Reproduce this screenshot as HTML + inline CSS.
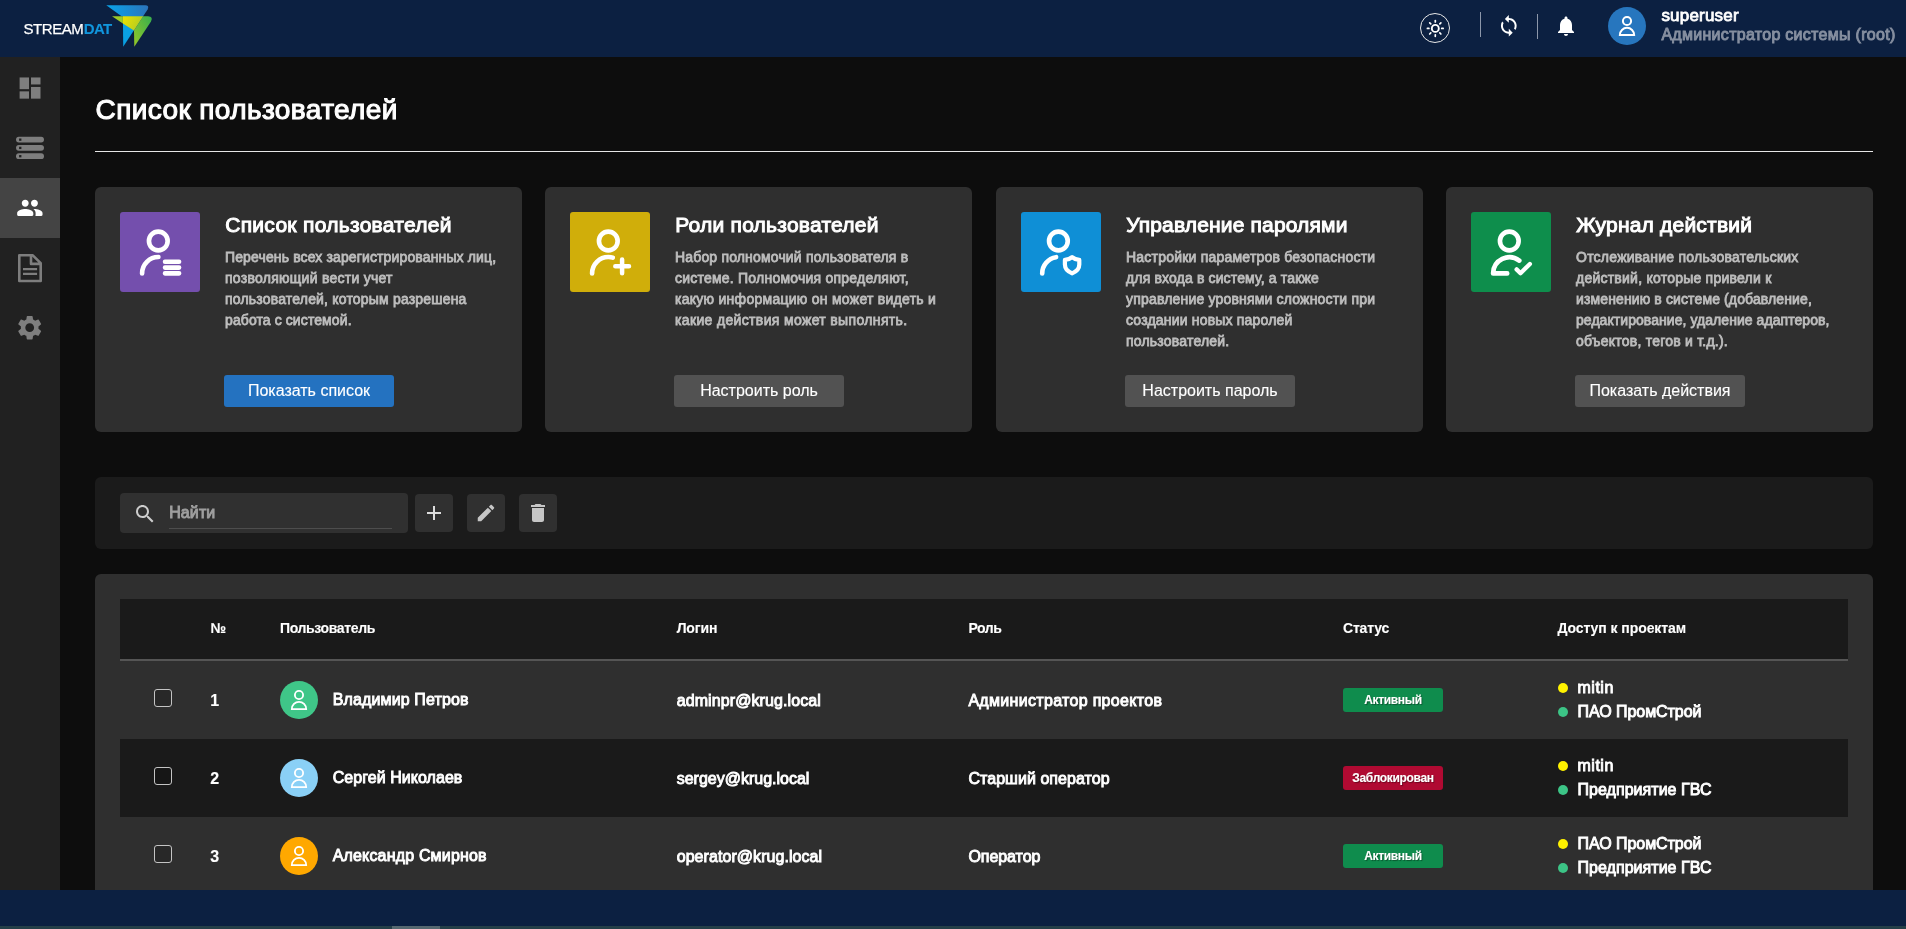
<!DOCTYPE html>
<html lang="ru">
<head>
<meta charset="utf-8">
<title>Список пользователей</title>
<style>
*{box-sizing:border-box;margin:0;padding:0}
html,body{width:1906px;height:929px;overflow:hidden;background:#0d0d0d;font-family:"Liberation Sans",sans-serif;color:#fff}
#root{position:absolute;left:0;top:0;width:1906px;height:929px;will-change:transform}
.abs{position:absolute}
.t{position:absolute;white-space:nowrap;font-weight:400}
.m{-webkit-text-stroke:.9px currentColor}
.b{font-weight:700;-webkit-text-stroke:.12px currentColor}
#hdr{position:absolute;left:0;top:0;width:1906px;height:57px;background:#0c2041}
#side{position:absolute;left:0;top:57px;width:60px;height:833px;background:#212121}
#side .act{position:absolute;left:0;top:121px;width:60px;height:60px;background:#444}
#foot{position:absolute;left:0;top:890px;width:1906px;height:36px;background:#0c2041}
#strip{position:absolute;left:0;top:926px;width:1906px;height:3px;background:#253f48}
#strip i{position:absolute;left:392px;top:0;width:48px;height:3px;background:#566870}
#hr{position:absolute;left:95px;top:151px;width:1778px;height:1px;background:#e6e6e6}
.card{position:absolute;top:187px;width:427px;height:245px;background:#2f2f2f;border-radius:6px}
.ico{position:absolute;left:25px;top:25px;width:80px;height:80px;border-radius:3px}
.ico svg{position:absolute;left:0;top:0}
.desc{position:absolute;left:130px;top:59.6px;font-size:14px;line-height:21px;color:#bdbdbd;white-space:nowrap;-webkit-text-stroke:.8px currentColor}
.btn{position:absolute;left:129px;top:188px;width:170px;height:32px;border-radius:3px;background:#525252;font-size:16px;line-height:32px;text-align:center;white-space:nowrap;-webkit-text-stroke:.12px currentColor}
.btn.pri{background:#2472c0}
#tools{position:absolute;left:95px;top:477px;width:1778px;height:72px;background:#1b1b1b;border-radius:6px}
#search{position:absolute;left:25px;top:16px;width:288px;height:40px;background:#303030;border-radius:4px}
#search u{position:absolute;left:49px;top:34.5px;width:223px;height:1px;background:#4d4d4d}
.tb{position:absolute;top:17px;width:38px;height:38px;background:#303030;border-radius:4px}
#panel{position:absolute;left:95px;top:574px;width:1778px;height:330px;background:#2f2f2f;border-radius:6px}
#thead{position:absolute;left:25px;top:25px;width:1728px;height:62px;background:#1a1a1a;border-bottom:2px solid #555}
.row{position:absolute;left:25px;width:1728px;height:78px}
.row.dark{background:#1a1a1a}
.cb{position:absolute;left:34px;top:28px;width:18px;height:18px;border:1px solid #c4c4c4;border-radius:3px;background:rgba(0,0,0,.15)}
.av{position:absolute;left:160px;top:20px;width:38px;height:38px;border-radius:50%}
.bdg{position:absolute;left:1223px;top:27px;width:100px;height:24px;border-radius:3px;background:#0f8c4d}
.bdg.red{background:#b00a32}
.dot{position:absolute;left:1437.5px;width:10px;height:10px;border-radius:50%}
.y{background:#fff200}.g{background:#3cc486}
</style>
</head>
<body>
<div id="root">
<div id="hdr">
<span class="t " style="left:23.5px;top:18.8px;font-size:15px;line-height:19px;letter-spacing:-0.436px;-webkit-text-stroke:.25px #fff;">STREAM</span>
<span class="t b" style="left:83.8px;top:18.8px;font-size:15px;line-height:19px;letter-spacing:-0.706px;color:#1196dd;">DAT</span>
<svg class="abs" style="left:100px;top:0" width="60" height="56" viewBox="100 0 60 56">
<defs>
<linearGradient id="lb" x1="108" y1="10" x2="148" y2="10" gradientUnits="userSpaceOnUse"><stop offset="0" stop-color="#0aa2e8"/><stop offset="1" stop-color="#2b74bc"/></linearGradient>
<linearGradient id="lg" x1="126" y1="34" x2="151" y2="20" gradientUnits="userSpaceOnUse"><stop offset="0" stop-color="#98c926"/><stop offset="1" stop-color="#3db04b"/></linearGradient>
<linearGradient id="ly" x1="123" y1="18" x2="140" y2="26" gradientUnits="userSpaceOnUse"><stop offset="0" stop-color="#ece100"/><stop offset="1" stop-color="#b4cd22"/></linearGradient>
</defs>
<path fill="url(#lb)" d="M106.3 5.3H145.2Q149.6 5.3 147.6 9.4L143.1 16.3H121.6Z"/>
<path fill="#0aa0e2" d="M122.9 16.3H143.1L123.2 46.8Z"/>
<path fill="#9ccb28" d="M112 16.3H122.9V23.4Z"/>
<path fill="url(#lg)" d="M143.1 16.3H148.2Q153.4 16.9 151 21.4L134.3 46.8L134 30.5Z"/>
<path fill="url(#ly)" d="M122.9 16.3H143.1L133.9 30.5L122.9 23.4Z"/>
</svg>
<div class="abs" style="left:1420px;top:13px;width:30px;height:30px;border:1px solid #e8e8e8;border-radius:50%"></div>
<svg class="abs" style="left:1423px;top:16px" width="24" height="24" viewBox="-12 -12 24 24" fill="none" stroke="#fff" stroke-linecap="round"><circle cx="0.3" cy="0.4" r="3.5" stroke-width="1.9"/><g transform="translate(0.3 0.4)" stroke-width="1.7"><line x1="0" y1="-6.4" x2="0" y2="-7.9" transform="rotate(0)"/><line x1="0" y1="-6.4" x2="0" y2="-7.9" transform="rotate(45)"/><line x1="0" y1="-6.4" x2="0" y2="-7.9" transform="rotate(90)"/><line x1="0" y1="-6.4" x2="0" y2="-7.9" transform="rotate(135)"/><line x1="0" y1="-6.4" x2="0" y2="-7.9" transform="rotate(180)"/><line x1="0" y1="-6.4" x2="0" y2="-7.9" transform="rotate(225)"/><line x1="0" y1="-6.4" x2="0" y2="-7.9" transform="rotate(270)"/><line x1="0" y1="-6.4" x2="0" y2="-7.9" transform="rotate(315)"/></g></svg>
<div class="abs" style="left:1480px;top:12px;width:1px;height:25px;background:#8d97aa"></div>
<svg class="abs" style="left:1497.2px;top:14.1px" width="23.6" height="23.6" viewBox="0 0 24 24"><path fill="#fff" d="M12 4V1L8 5l4 4V6c3.31 0 6 2.69 6 6 0 1.01-.25 1.97-.7 2.8l1.46 1.46C19.54 15.03 20 13.57 20 12c0-4.42-3.58-8-8-8zm0 14c-3.31 0-6-2.69-6-6 0-1.01.25-1.97.7-2.8L5.24 7.74C4.46 8.97 4 10.43 4 12c0 4.42 3.58 8 8 8v3l4-4-4-4v3z"/></svg>
<div class="abs" style="left:1537px;top:14px;width:1px;height:25px;background:#8d97aa"></div>
<svg class="abs" style="left:1554px;top:13.5px" width="24" height="24" viewBox="0 0 24 24"><path fill="#fff" d="M12 22c1.1 0 2-.9 2-2h-4c0 1.1.89 2 2 2zm6-6v-5c0-3.07-1.64-5.64-4.5-6.32V4c0-.83-.67-1.5-1.5-1.5s-1.5.67-1.5 1.5v.68C7.63 5.36 6 7.92 6 11v5l-2 2v1h16v-1l-2-2z"/></svg>
<div class="abs" style="left:1608px;top:7px;width:38px;height:38px;border-radius:50%;background:#2776be"><svg width="38" height="38" viewBox="0 0 38 38" fill="none" stroke="#fff" stroke-width="2"><circle cx="19" cy="14" r="4.1"/><path d="M11.85 28.05A7.15 7.2 0 0 1 26.15 28.05Z" stroke-linejoin="miter"/></svg></div>
<span class="t m" style="left:1661.4px;top:5.11px;font-size:17px;line-height:22px;letter-spacing:0.199px;-webkit-text-stroke:.8px #fff;">superuser</span>
<span class="t m" style="left:1661.4px;top:25.46px;font-size:16px;line-height:20px;letter-spacing:0.288px;color:#868fa0;">Администратор системы (root)</span>
</div>
<div id="side"><div class="act"></div>
<svg class="abs" style="left:0;top:0" width="60" height="60" viewBox="0 0 60 60" fill="#7e7e7e"><rect x="19.6" y="20.45" width="9.4" height="11.7"/><rect x="19.6" y="34.35" width="9.4" height="7.3"/><rect x="31" y="20.45" width="9.5" height="7"/><rect x="31" y="29.95" width="9.5" height="11.7"/></svg>
<svg class="abs" style="left:0;top:0" width="60" height="120" viewBox="0 0 60 120"><rect x="16" y="79.7" width="28" height="5.8" rx="2.9" fill="#7e7e7e"/><rect x="19.1" y="81.5" width="2.3" height="2.3" fill="#212121"/><rect x="16" y="87.95" width="28" height="5.8" rx="2.9" fill="#7e7e7e"/><rect x="19.1" y="89.75" width="2.3" height="2.3" fill="#212121"/><rect x="16" y="96.25" width="28" height="5.8" rx="2.9" fill="#7e7e7e"/><rect x="19.1" y="98.05" width="2.3" height="2.3" fill="#212121"/></svg>
<svg class="abs" style="left:16.1px;top:137.25px" width="27.7" height="27.7" viewBox="0 0 24 24"><path fill="#fff" d="M16 11c1.66 0 2.99-1.34 2.99-3S17.66 5 16 5s-3 1.34-3 3 1.34 3 3 3zm-8 0c1.66 0 2.99-1.34 2.99-3S9.66 5 8 5 5 6.34 5 8s1.34 3 3 3zm0 2c-2.33 0-7 1.17-7 3.5V18c0 .55.45 1 1 1h12c.55 0 1-.45 1-1v-1.5c0-2.33-4.67-3.5-7-3.5zm8 0c-.29 0-.62.02-.97.05.02.01.03.03.04.04 1.14.83 1.93 1.94 1.93 3.41V18c0 .35-.07.69-.18 1H22c.55 0 1-.45 1-1v-1.5c0-2.33-4.67-3.5-7-3.5z"/></svg>
<svg class="abs" style="left:0;top:181px" width="60" height="60" viewBox="0 0 60 60" fill="none" stroke="#7e7e7e" stroke-linejoin="round"><path stroke-width="2.6" d="M19.3 17.3H32.8L40.7 25.2V43H19.3Z M31 17.3V25.9H40.7"/><path stroke-width="2.2" d="M23 31.1H37.1M23 35.85H37.1"/></svg>
<svg class="abs" style="left:15.3px;top:256.1px" width="29.4" height="29.4" viewBox="0 0 24 24"><path fill="#7e7e7e" d="M19.14 12.94c.04-.3.06-.61.06-.94 0-.32-.02-.64-.07-.94l2.03-1.58c.18-.14.23-.41.12-.61l-1.92-3.32c-.12-.22-.37-.29-.59-.22l-2.39.96c-.5-.38-1.03-.7-1.62-.94l-.36-2.54c-.04-.24-.24-.41-.48-.41h-3.84c-.24 0-.43.17-.47.41l-.36 2.54c-.59.24-1.13.57-1.62.94l-2.39-.96c-.22-.08-.47 0-.59.22L2.74 8.87c-.12.21-.08.47.12.61l2.03 1.58c-.05.3-.09.63-.09.94s.02.64.07.94l-2.03 1.58c-.18.14-.23.41-.12.61l1.92 3.32c.12.22.37.29.59.22l2.39-.96c.5.38 1.03.7 1.62.94l.36 2.54c.05.24.24.41.48.41h3.84c.24 0 .44-.17.47-.41l.36-2.54c.59-.24 1.13-.56 1.62-.94l2.39.96c.22.08.47 0 .59-.22l1.92-3.32c.12-.22.07-.47-.12-.61l-2.01-1.58zM12 15.6c-1.98 0-3.6-1.62-3.6-3.6s1.62-3.6 3.6-3.6 3.6 1.62 3.6 3.6-1.62 3.6-3.6 3.6z"/></svg>
</div>
<span class="t " style="left:95.6px;top:92.6px;font-size:28px;line-height:34px;letter-spacing:0.396px;-webkit-text-stroke:1.1px #fff;">Список пользователей</span>
<div id="hr"></div>
<div class="card" style="left:95px">
<div class="ico" style="background:#744fad"><svg width="80" height="80" viewBox="0 0 80 80" stroke="#fff" fill="none" stroke-linecap="round" stroke-linejoin="round"><circle cx="38.3" cy="29" r="9.35" stroke-width="4.65"/><path stroke-width="4.65" d="M22.1 61.4A16.3 16.4 0 0 1 38.4 45"/><g stroke="none" fill="#fff"><rect x="42.8" y="47.4" width="18.5" height="4.7" rx="2.1"/><rect x="42.8" y="53.2" width="18.5" height="4.7" rx="2.1"/><rect x="42.8" y="59" width="18.5" height="4.7" rx="2.1"/></g></svg></div>
<span class="t " style="left:130.2px;top:24.52px;font-size:21px;line-height:26px;letter-spacing:0.297px;-webkit-text-stroke:1px #fff;">Список пользователей</span>
<p class="desc"><span style="letter-spacing:0.132px">Перечень всех зарегистрированных лиц,</span><br><span style="letter-spacing:0.268px">позволяющий вести учет</span><br><span style="letter-spacing:0.188px">пользователей, которым разрешена</span><br><span style="letter-spacing:0.098px">работа с системой.</span></p>
<div class="btn pri">Показать список</div>
</div>
<div class="card" style="left:545px">
<div class="ico" style="background:#d0ae0a"><svg width="80" height="80" viewBox="0 0 80 80" stroke="#fff" fill="none" stroke-linecap="round" stroke-linejoin="round"><circle cx="38.3" cy="29" r="9.35" stroke-width="4.65"/><path stroke-width="4.65" d="M22.1 61.4A16.3 16.4 0 0 1 38.4 45Q41 45 42.8 45.6"/><path stroke-width="4.5" d="M45.3 54.3H59M52.1 47.5V61.3"/></svg></div>
<span class="t " style="left:130.2px;top:24.52px;font-size:21px;line-height:26px;letter-spacing:0.243px;-webkit-text-stroke:1px #fff;">Роли пользователей</span>
<p class="desc"><span style="letter-spacing:0.168px">Набор полномочий пользователя в</span><br><span style="letter-spacing:0.225px">системе. Полномочия определяют,</span><br><span style="letter-spacing:0.269px">какую информацию он может видеть и</span><br><span style="letter-spacing:0.349px">какие действия может выполнять.</span></p>
<div class="btn">Настроить роль</div>
</div>
<div class="card" style="left:996px">
<div class="ico" style="background:#0f8fd6"><svg width="80" height="80" viewBox="0 0 80 80" stroke="#fff" fill="none" stroke-linecap="round" stroke-linejoin="round"><g transform="translate(-0.9 0)"><circle cx="38.3" cy="29" r="9.35" stroke-width="4.65"/><path stroke-width="4.65" d="M22.1 61.4A16.3 16.4 0 0 1 36 45.2"/><path stroke-width="4.2" stroke-linejoin="round" d="M52 45.1Q49.2 47.6 44.8 47.9V52.6C44.8 56.6 47.6 59.6 52 61.4C56.4 59.6 59.2 56.6 59.2 52.6V47.9Q54.8 47.6 52 45.1Z"/></g></svg></div>
<span class="t " style="left:130.2px;top:24.52px;font-size:21px;line-height:26px;letter-spacing:0.159px;-webkit-text-stroke:1px #fff;">Управление паролями</span>
<p class="desc"><span style="letter-spacing:0.217px">Настройки параметров безопасности</span><br><span style="letter-spacing:0.147px">для входа в систему, а также</span><br><span style="letter-spacing:0.183px">управление уровнями сложности при</span><br><span style="letter-spacing:0.185px">создании новых паролей</span><br><span style="letter-spacing:0.202px">пользователей.</span></p>
<div class="btn">Настроить пароль</div>
</div>
<div class="card" style="left:1446px">
<div class="ico" style="background:#0e8e4c"><svg width="80" height="80" viewBox="0 0 80 80" stroke="#fff" fill="none" stroke-linecap="round" stroke-linejoin="round"><circle cx="38.3" cy="29" r="9.35" stroke-width="4.65"/><path stroke-width="4.65" d="M48.3 48.6A16.3 16.4 0 0 0 22.1 61.4H36.2"/><path stroke-width="4.3" d="M45.6 57.4L49.5 61.2L58.9 52"/></svg></div>
<span class="t " style="left:130.2px;top:24.52px;font-size:21px;line-height:26px;letter-spacing:0.206px;-webkit-text-stroke:1px #fff;">Журнал действий</span>
<p class="desc"><span style="letter-spacing:0.237px">Отслеживание пользовательских</span><br><span style="letter-spacing:0.236px">действий, которые привели к</span><br><span style="letter-spacing:0.124px">изменению в системе (добавление,</span><br><span style="letter-spacing:0.057px">редактирование, удаление адаптеров,</span><br><span style="letter-spacing:0.229px">объектов, тегов и т.д.).</span></p>
<div class="btn">Показать действия</div>
</div>
<div id="tools"><div id="search">
<svg class="abs" style="left:13.3px;top:8.8px" width="24" height="24" viewBox="0 0 24 24"><path fill="#cdcdcd" d="M15.5 14h-.79l-.28-.27C15.41 12.59 16 11.11 16 9.5 16 5.91 13.09 3 9.5 3S3 5.91 3 9.5 5.91 16 9.5 16c1.61 0 3.09-.59 4.23-1.57l.27.28v.79l5 4.99L20.49 19l-4.99-5zm-6 0C7.01 14 5 11.99 5 9.5S7.01 5 9.5 5 14 7.01 14 9.5 11.99 14 9.5 14z"/></svg>
<span class="t m" style="left:49.2px;top:9.66px;font-size:16px;line-height:20px;letter-spacing:0.113px;color:#9e9e9e;">Найти</span>
<u></u></div>
<div class="tb" style="left:320px"><svg class="abs" style="left:7.0px;top:7.0px" width="24" height="24" viewBox="0 0 24 24"><path fill="#dcdcdc" d="M19 13h-6v6h-2v-6H5v-2h6V5h2v6h6v2z"/></svg></div>
<div class="tb" style="left:372px"><svg class="abs" style="left:8.0px;top:8.0px" width="22" height="22" viewBox="0 0 24 24"><path fill="#c6c6c6" d="M3 17.25V21h3.75L17.81 9.94l-3.75-3.75L3 17.25zM20.71 7.04c.39-.39.39-1.02 0-1.41l-2.34-2.34c-.39-.39-1.02-.39-1.41 0l-1.83 1.83 3.75 3.75 1.83-1.83z"/></svg></div>
<div class="tb" style="left:424px"><svg class="abs" style="left:7.0px;top:7.0px" width="24" height="24" viewBox="0 0 24 24"><path fill="#c6c6c6" d="M6 19c0 1.1.9 2 2 2h8c1.1 0 2-.9 2-2V7H6v12zM19 4h-3.5l-1-1h-5l-1 1H5v2h14V4z"/></svg></div>
</div>
<div id="panel"><div id="thead">
<span class="t b" style="left:90.6px;top:20.15px;font-size:14px;line-height:18px;letter-spacing:-1.009px;">№</span>
<span class="t b" style="left:160px;top:20.15px;font-size:14px;line-height:18px;letter-spacing:-0.357px;">Пользователь</span>
<span class="t b" style="left:556.7px;top:20.15px;font-size:14px;line-height:18px;letter-spacing:-0.156px;">Логин</span>
<span class="t b" style="left:848.4px;top:20.15px;font-size:14px;line-height:18px;letter-spacing:-0.376px;">Роль</span>
<span class="t b" style="left:1223px;top:20.15px;font-size:14px;line-height:18px;letter-spacing:-0.198px;">Статус</span>
<span class="t b" style="left:1437.4px;top:20.15px;font-size:14px;line-height:18px;letter-spacing:-0.07px;">Доступ к проектам</span>
</div>
<div class="row" style="top:87px"><div class="cb"></div>
<span class="t b" style="left:90.30000000000001px;top:30.46px;font-size:16px;line-height:20px;letter-spacing:-1.406px;">1</span>
<div class="av" style="background:#3fc688"><svg width="38" height="38" viewBox="0 0 38 38" fill="none" stroke="#fff" stroke-width="1.85"><circle cx="19" cy="14" r="4.1"/><path d="M11.85 28.05A7.15 7.2 0 0 1 26.15 28.05Z" stroke-linejoin="miter"/></svg></div>
<span class="t m" style="left:212.7px;top:29.46px;font-size:16px;line-height:20px;letter-spacing:0.133px;">Владимир Петров</span>
<span class="t m" style="left:556.7px;top:30.46px;font-size:16px;line-height:20px;letter-spacing:0.092px;">adminpr@krug.local</span>
<span class="t m" style="left:848.4px;top:30.46px;font-size:16px;line-height:20px;letter-spacing:0.312px;">Администратор проектов</span>
<div class="bdg"><span class="t b" style="left:0px;top:4.64px;font-size:12px;line-height:15px;letter-spacing:-0.338px;left:0;width:100px;text-align:center;text-shadow:1px 1px 1px rgba(0,0,0,.4);">Активный</span></div>
<i class="dot y" style="top:22.3px"></i><span class="t m" style="left:1457.5px;top:17.16px;font-size:16px;line-height:20px;letter-spacing:0.509px;">mitin</span>
<i class="dot g" style="top:46.3px"></i><span class="t m" style="left:1457.5px;top:40.66px;font-size:16px;line-height:20px;letter-spacing:-0.054px;">ПАО ПромСтрой</span>
</div>
<div class="row dark" style="top:165px"><div class="cb"></div>
<span class="t b" style="left:90.30000000000001px;top:30.46px;font-size:16px;line-height:20px;letter-spacing:-1.406px;">2</span>
<div class="av" style="background:#8ad0f6"><svg width="38" height="38" viewBox="0 0 38 38" fill="none" stroke="#fff" stroke-width="1.85"><circle cx="19" cy="14" r="4.1"/><path d="M11.85 28.05A7.15 7.2 0 0 1 26.15 28.05Z" stroke-linejoin="miter"/></svg></div>
<span class="t m" style="left:212.7px;top:29.46px;font-size:16px;line-height:20px;letter-spacing:0.05px;">Сергей Николаев</span>
<span class="t m" style="left:556.7px;top:30.46px;font-size:16px;line-height:20px;letter-spacing:-0.005px;">sergey@krug.local</span>
<span class="t m" style="left:848.4px;top:30.46px;font-size:16px;line-height:20px;letter-spacing:0.047px;">Старший оператор</span>
<div class="bdg red"><span class="t b" style="left:0px;top:4.64px;font-size:12px;line-height:15px;letter-spacing:-0.328px;left:0;width:100px;text-align:center;text-shadow:1px 1px 1px rgba(0,0,0,.4);">Заблокирован</span></div>
<i class="dot y" style="top:22.3px"></i><span class="t m" style="left:1457.5px;top:17.16px;font-size:16px;line-height:20px;letter-spacing:0.509px;">mitin</span>
<i class="dot g" style="top:46.3px"></i><span class="t m" style="left:1457.5px;top:40.66px;font-size:16px;line-height:20px;letter-spacing:0.04px;">Предприятие ГВС</span>
</div>
<div class="row" style="top:243px"><div class="cb"></div>
<span class="t b" style="left:90.30000000000001px;top:30.46px;font-size:16px;line-height:20px;letter-spacing:-1.406px;">3</span>
<div class="av" style="background:#ffa800"><svg width="38" height="38" viewBox="0 0 38 38" fill="none" stroke="#fff" stroke-width="1.85"><circle cx="19" cy="14" r="4.1"/><path d="M11.85 28.05A7.15 7.2 0 0 1 26.15 28.05Z" stroke-linejoin="miter"/></svg></div>
<span class="t m" style="left:212.7px;top:29.46px;font-size:16px;line-height:20px;letter-spacing:0.17px;">Александр Смирнов</span>
<span class="t m" style="left:556.7px;top:30.46px;font-size:16px;line-height:20px;letter-spacing:0.062px;">operator@krug.local</span>
<span class="t m" style="left:848.4px;top:30.46px;font-size:16px;line-height:20px;letter-spacing:-0.055px;">Оператор</span>
<div class="bdg"><span class="t b" style="left:0px;top:4.64px;font-size:12px;line-height:15px;letter-spacing:-0.338px;left:0;width:100px;text-align:center;text-shadow:1px 1px 1px rgba(0,0,0,.4);">Активный</span></div>
<i class="dot y" style="top:22.3px"></i><span class="t m" style="left:1457.5px;top:17.16px;font-size:16px;line-height:20px;letter-spacing:-0.054px;">ПАО ПромСтрой</span>
<i class="dot g" style="top:46.3px"></i><span class="t m" style="left:1457.5px;top:40.66px;font-size:16px;line-height:20px;letter-spacing:0.04px;">Предприятие ГВС</span>
</div>
</div>
<div id="foot"></div>
<div id="strip"><i></i></div>
</div>
</body>
</html>
